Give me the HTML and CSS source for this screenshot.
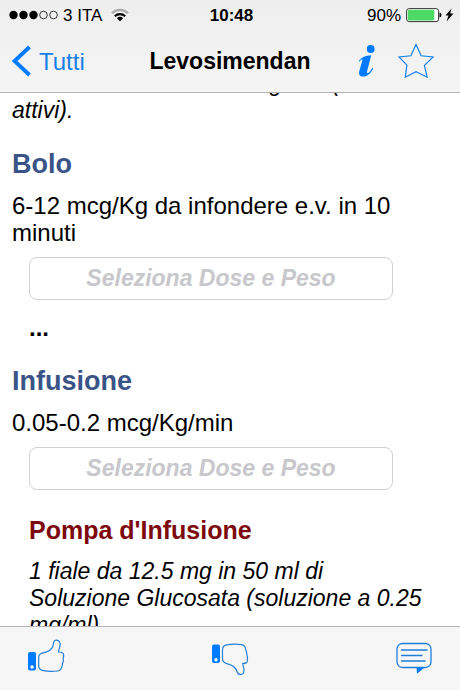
FILE: index.html
```html
<!DOCTYPE html>
<html lang="it">
<head>
<meta charset="utf-8">
<meta name="viewport" content="width=device-width, initial-scale=1">
<title>Levosimendan</title>
<link rel="stylesheet" href="styles.css">
</head>
<body>
<header class="top">
  <div class="status">
    <div class="carrier">
      <svg width="49" height="10" viewBox="0 0 49 10" aria-hidden="true">
        <g fill="#000"><circle cx="4.500" cy="5" r="4.200"/><circle cx="14.500" cy="5" r="4.200"/><circle cx="24.500" cy="5" r="4.200"/></g>
        <g fill="none" stroke="#222" stroke-width=".9"><circle cx="34.500" cy="5" r="3.800"/><circle cx="44.500" cy="5" r="3.800"/></g>
      </svg>
      <span>3 ITA</span>
      <svg class="wifi" width="18" height="14" viewBox="0 0 18 14" aria-hidden="true">
        <g fill="none" stroke-width="2.200"><path d="M1 5.200a11.500 11.500 0 0 1 16 0" stroke="#aaa"/><path d="M3.800 8.300a7.500 7.500 0 0 1 10.400 0" stroke="#000"/></g>
        <path d="M5.900 10.300a4.500 4.500 0 0 1 6.200 0L9 13.300z"/>
      </svg>
    </div>
    <time class="clock">10:48</time>
    <div class="power">
      <span>90%</span>
      <svg width="48" height="16" viewBox="0 0 48 16" aria-hidden="true">
        <rect x=".6" y="1.600" width="32" height="13" rx="2.500" fill="#fff" stroke="#333" stroke-width="1"/>
        <rect x="1.800" y="2.700" width="26.500" height="10.800" rx="1.500" fill="#4cd964"/>
        <path d="M33.500 5.500q2 .5 2 2.500t-2 2.500z"/>
        <path d="M45.500 1.500l-6 7h3l-2 6 7-8h-3.300z"/>
      </svg>
    </div>
  </div>
  <nav class="bar">
    <a class="back" href="#">
      <svg width="19" height="32" viewBox="0 0 19 32" aria-hidden="true"><path d="M17.500 2L2.500 16l15 14" fill="none" stroke="#007aff" stroke-width="3.800"/></svg>
      <span>Tutti</span>
    </a>
    <h1 class="title">Levosimendan</h1>
    <div class="actions">
      <button class="icon" type="button" aria-label="Informazioni">
        <svg width="18" height="34" viewBox="0 0 18 34" fill="#007aff"><circle cx="12.700" cy="5" r="3.900"/><path d="M.8 17.200C3.300 13.500 7 11.500 13.300 11.300L9.200 26.800c-.7 2.800.6 3 2 1.500 1.400-1.400 2.200-2.800 3.100-4.500l1 .5C13 29.500 9.500 32.600 5.300 32.600c-3.700 0-4.900-2.300-3.900-5.800L4.300 16.400c.4-1.600-.8-1.600-2.700 1.400z"/></svg>
      </button>
      <button class="icon" type="button" aria-label="Preferiti">
        <svg width="36" height="36" viewBox="0 0 36 36"><path d="M18 1.500l5.100 11.300 12 1.200-8.700 8.400 2.800 11.800L18 28.700 7.300 34.200l1.600-12L1 14l11.900-1.200z" fill="none" stroke="#1680ec" stroke-width="1.200"/></svg>
      </button>
    </div>
  </nav>
</header>

<main class="content">
  <p class="note">Durata dell'effetto da 7-9 giorni (metaboliti<br>attivi).</p>

  <section>
    <h2 class="heading">Bolo</h2>
    <p class="text"><label for="bolo">6-12 mcg/Kg da infondere e.v. in 10 minuti</label></p>
    <input class="field" id="bolo" type="text" placeholder="Seleziona Dose e Peso" readonly>
    <output class="result" for="bolo">...</output>
  </section>

  <section>
    <h2 class="heading">Infusione</h2>
    <p class="text"><label for="infusione">0.05-0.2 mcg/Kg/min</label></p>
    <input class="field" id="infusione" type="text" placeholder="Seleziona Dose e Peso" readonly>
    <div class="pump">
      <h3 class="subheading">Pompa d'Infusione</h3>
      <p class="dilution">1 fiale da 12.5 mg in 50 ml di Soluzione Glucosata (soluzione a 0.25 mg/ml)</p>
    </div>
  </section>
</main>

<footer class="toolbar">
  <button class="icon" type="button" aria-label="Mi piace">
    <svg width="38" height="38" viewBox="0 0 38 38"><rect x="1" y="13" width="8" height="18.500" rx="2" fill="#007aff"/><circle cx="5" cy="28" r="1.700" fill="#fff"/><path d="M11.700 18.500C11.700 15.500 13 14.300 16 13.800C21.500 12.800 24.500 11 25.800 7.500C26.700 5 26 2.500 27.800 1.500C30.500.3 33.300 2.300 33.200 5.500C33.100 8.300 31.500 10.300 31.600 13C34.500 12.900 36.600 13.700 36.700 16.500C36.800 17.500 36.200 18 36.200 19C36.200 20 36.600 20.500 36.300 21.800C36.100 23.300 35.600 24.500 35.300 26C34.700 29.800 33.500 31.700 30.500 32C25.500 32.500 20 32.500 15.500 31.300C12.500 30.500 11.700 29.300 11.700 27z" fill="none" stroke="#2480d8" stroke-width="1.200"/></svg>
  </button>
  <button class="icon" type="button" aria-label="Non mi piace">
    <svg width="38" height="38" viewBox="0 0 38 38"><rect x="1" y="5.500" width="8" height="18.500" rx="2" fill="#007aff"/><circle cx="5" cy="20.700" r="1.700" fill="#fff"/><path d="M11.500 11C11.500 7.800 12.500 6.500 15.500 5.900C20.500 5 25.500 5 30.500 5.700C33.300 6 34.300 7.500 34.800 10.500C35 12 35.700 13 35.800 14.800C35.900 16 36.500 17 36.500 19C36.500 20 36.300 20.500 36.400 21.500C36.300 23.800 34.500 24.600 31.800 24.400C31.800 27.500 33.200 28.500 33 31.500C32.800 34.300 31.500 35.600 29.500 35.600C27.300 35.600 26.600 34.300 26 32.500C24.700 28.300 21.500 26 16.500 24.800C13 24 11.500 22.500 11.500 19.500z" fill="none" stroke="#2480d8" stroke-width="1.200"/></svg>
  </button>
  <button class="icon" type="button" aria-label="Commenti">
    <svg width="38" height="38" viewBox="0 0 38 38"><rect x="2" y="4.500" width="34" height="24" rx="5.500" fill="none" stroke="#1f7ddb" stroke-width="1.300"/><path d="M6 11h26.500M6 16.500h21.500M6 22h24.500" stroke="#1f7ddb" stroke-width="1.500"/><path d="M21.500 28.500h8l-7.500 6.300z" fill="#007aff"/></svg>
  </button>
</footer>
</body>
</html>
```
FILE: styles.css
```css
* {
  box-sizing: border-box;
}

body {
  margin: 0;
  height: 100vh;
  display: flex;
  flex-direction: column;
  font-family: "Liberation Sans", Arial, sans-serif;
  font-size: 24px;
  line-height: 27px;
  color: #000;
  background: #fff;
}

h1,
h2,
h3,
p {
  margin: 0;
}

svg {
  display: block;
}

.top {
  background: linear-gradient(#eee, #f5f5f5);
  border-bottom: 1px solid #b4b4b4;
}

.status {
  display: grid;
  grid-template-columns: 1fr auto 1fr;
  align-items: center;
  height: 30px;
  padding: 0 6px 0 9px;
  font-size: 17px;
}

.carrier,
.power {
  display: flex;
  align-items: center;
  gap: 5px;
}

.power {
  justify-content: flex-end;
}

.wifi {
  margin-left: 4px;
}

.clock {
  font-weight: bold;
}

.bar {
  display: grid;
  grid-template-columns: 1fr auto 1fr;
  align-items: center;
  height: 62px;
  padding: 0 12px;
}

.back {
  display: flex;
  align-items: center;
  gap: 8px;
  color: #1a80e6;
  font-size: 24px;
  text-decoration: none;
}

.title {
  font-size: 23px;
  font-weight: bold;
}

.actions {
  display: flex;
  align-items: center;
  justify-content: flex-end;
  gap: 22px;
  padding-right: 14px;
}

.actions .icon {
  flex: none;
}

.icon {
  padding: 0;
  border: 0;
  background: none;
}

.content {
  flex: 1;
  min-height: 0;
  overflow: hidden;
  padding: 0 12px;
  display: flex;
  flex-direction: column;
}

.note {
  flex: none;
  margin-top: -23px;
  font-size: 23px;
  font-style: italic;
}

.heading {
  margin-top: 24px;
  font-size: 27px;
  line-height: 32px;
  color: #3b5488;
}

.text {
  margin-top: 12px;
}

.field {
  display: block;
  width: calc(100% - 72px);
  height: 43px;
  margin: 11px 0 0 17px;
  border: 1px solid #d0d0d2;
  border-radius: 8px;
  background: #fff;
  font: italic bold 23px "Liberation Sans", Arial, sans-serif;
  text-align: center;
}

.field::placeholder {
  color: #c7c7cc;
}

.result {
  display: block;
  margin: 14px 0 0 17px;
  font-weight: bold;
}

.pump {
  margin: 26px 0 0 17px;
  padding-right: 24px;
}

.subheading {
  font-size: 25px;
  line-height: 28px;
  color: #7d0a0e;
}

.dilution {
  margin-top: 14px;
  font-size: 23px;
  font-style: italic;
}

.toolbar {
  display: flex;
  justify-content: space-between;
  align-items: flex-start;
  height: 64px;
  padding: 12px 27px 0;
  border-top: 1px solid #b4b4b4;
  background: #f6f6f7;
}
```
